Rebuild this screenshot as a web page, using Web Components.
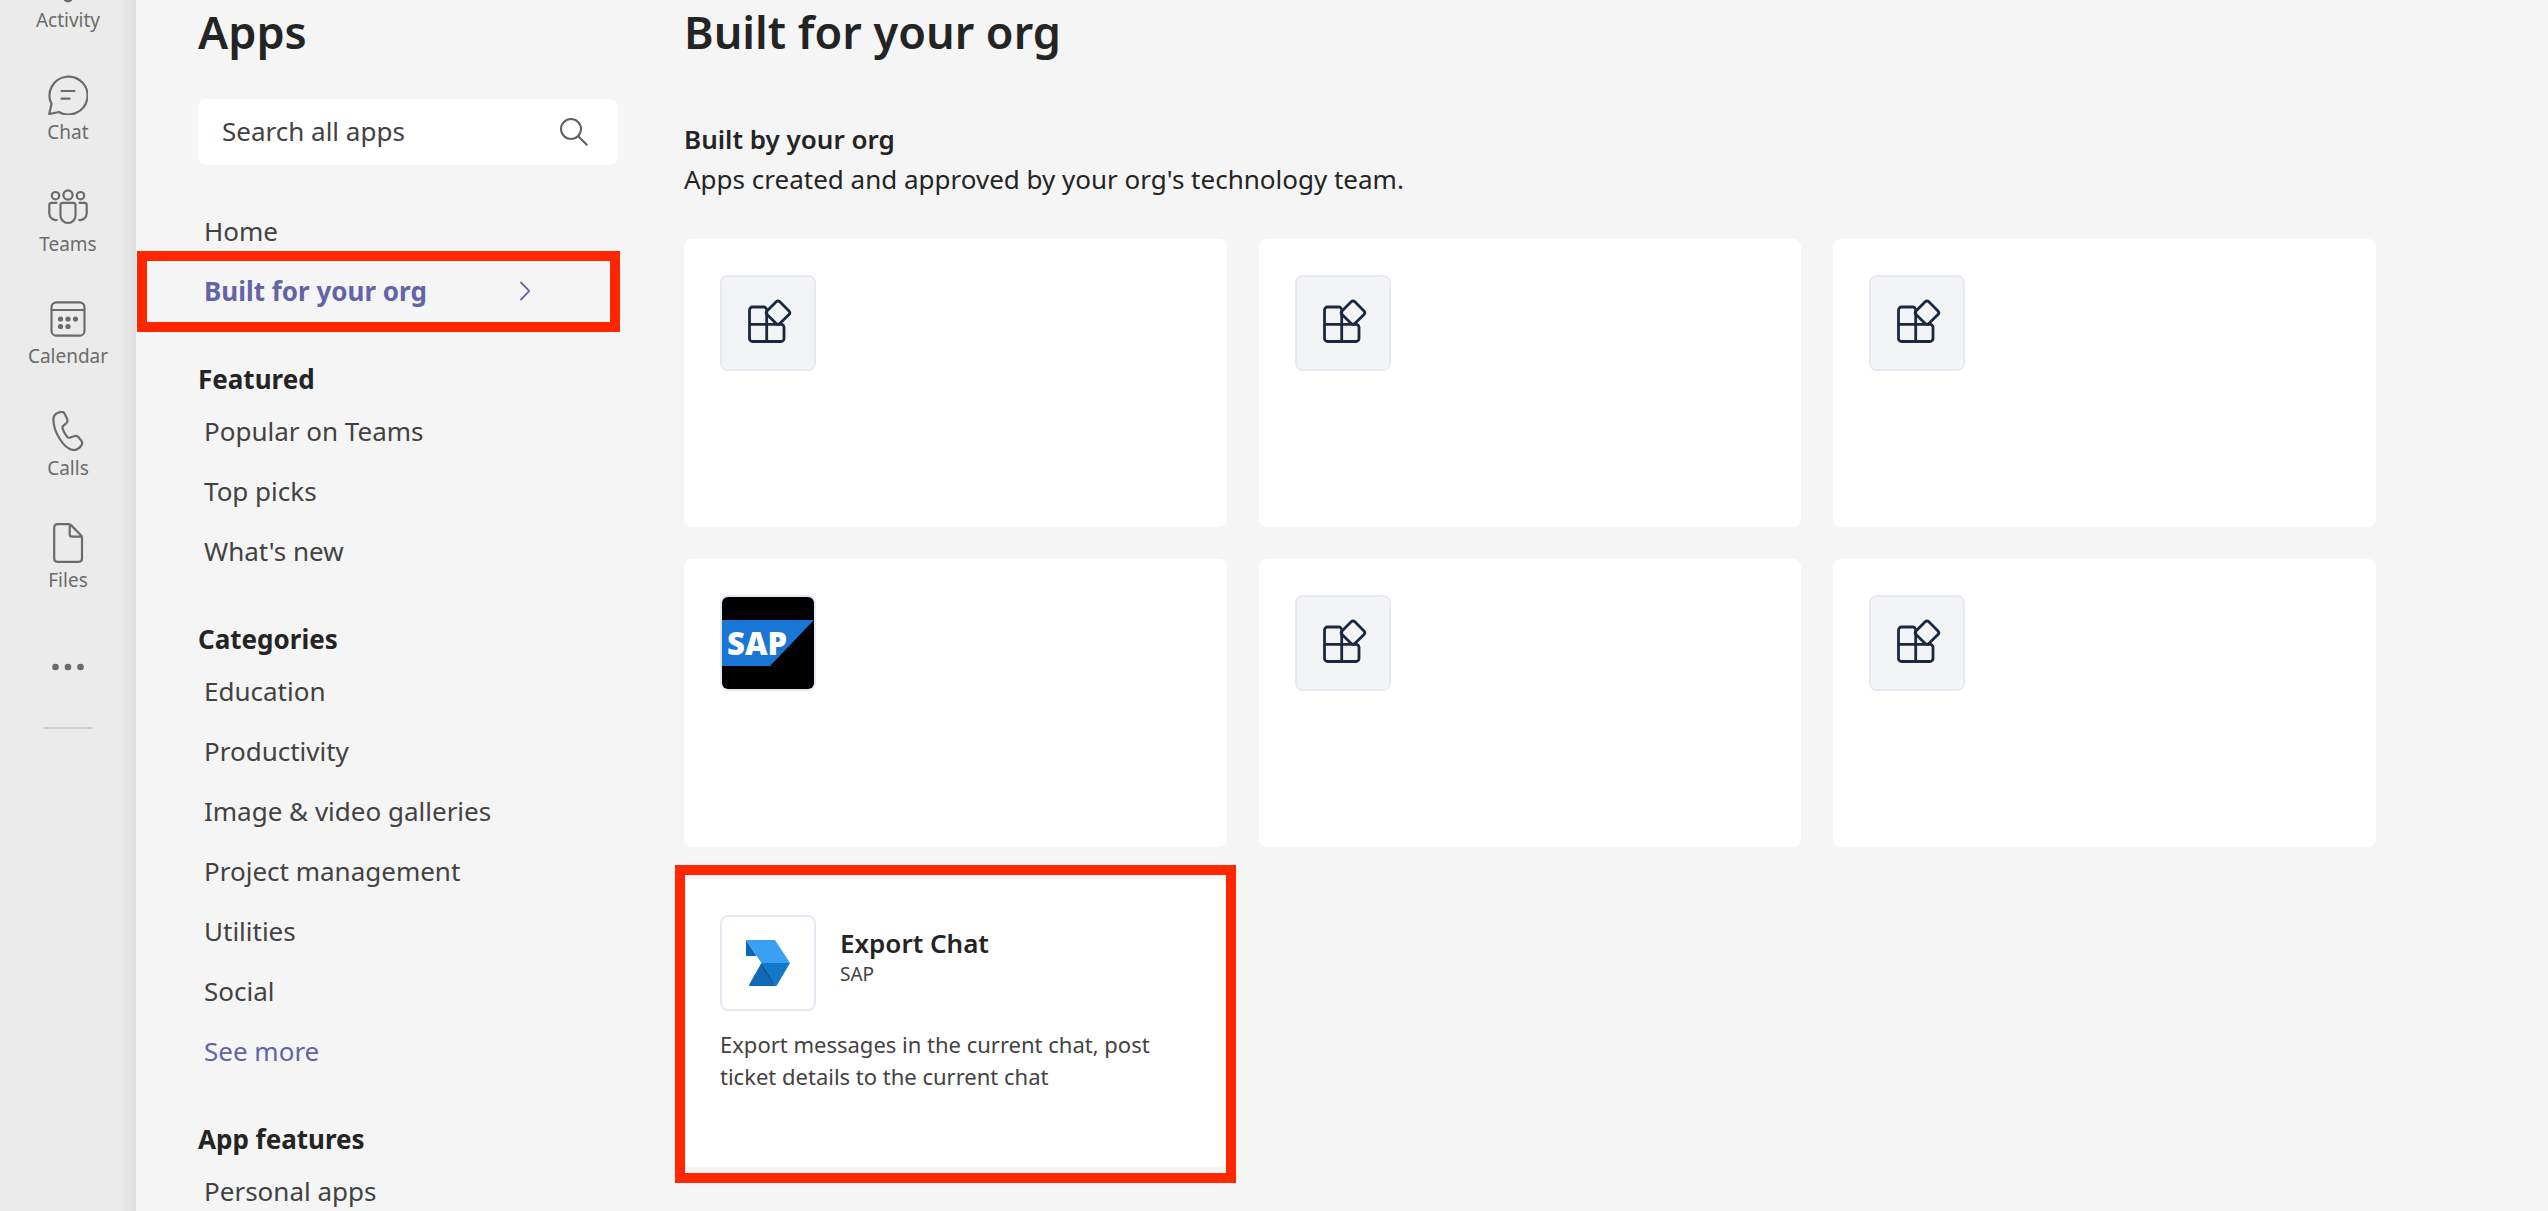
<!DOCTYPE html>
<html lang="en">
<head>
<meta charset="utf-8">
<title>Apps</title>
<style>
body { margin: 0; background: #f5f5f5; font-family: "Noto Sans", "Open Sans", sans-serif; color: #242424; }
</style>
</head>
<body>
<apps-shell>
  <app-rail slot="rail">
    <rail-item icon="bell">Activity</rail-item>
    <rail-item icon="chat">Chat</rail-item>
    <rail-item icon="teams">Teams</rail-item>
    <rail-item icon="calendar">Calendar</rail-item>
    <rail-item icon="calls">Calls</rail-item>
    <rail-item icon="files">Files</rail-item>
  </app-rail>
  <side-panel slot="side" heading="Apps">
    <nav-group>
      <nav-item>Home</nav-item>
      <nav-item current>Built for your org</nav-item>
    </nav-group>
    <nav-group heading="Featured">
      <nav-item>Popular on Teams</nav-item>
      <nav-item>Top picks</nav-item>
      <nav-item>What's new</nav-item>
    </nav-group>
    <nav-group heading="Categories">
      <nav-item>Education</nav-item>
      <nav-item>Productivity</nav-item>
      <nav-item>Image &amp; video galleries</nav-item>
      <nav-item>Project management</nav-item>
      <nav-item>Utilities</nav-item>
      <nav-item>Social</nav-item>
      <nav-item accent>See more</nav-item>
    </nav-group>
    <nav-group heading="App features">
      <nav-item>Personal apps</nav-item>
    </nav-group>
  </side-panel>
  <app-gallery heading="Built for your org" subheading="Built by your org" description="Apps created and approved by your org's technology team.">
    <app-card icon="apps"></app-card>
    <app-card icon="apps"></app-card>
    <app-card icon="apps"></app-card>
    <app-card icon="sap"></app-card>
    <app-card icon="apps"></app-card>
    <app-card icon="apps"></app-card>
    <app-card icon="export" name="Export Chat" publisher="SAP" marked>Export messages in the current chat, post ticket details to the current chat</app-card>
  </app-gallery>
</apps-shell>
<script>
const RAIL_ICONS = {
  bell: '<path d="M6 28h28l-3-7V12a11 11 0 0 0-22 0v9z"/><path fill="currentColor" d="M16 34.500a4 4 0 0 0 8 0z"/>',
  chat: '<path d="M3.500 29A19 19 0 1 1 11 37L1.200 39Z"/><path d="M13.500 16h13M13.500 23.700h8" stroke-linecap="round"/>',
  teams: '<circle cx="20" cy="8" r="4.600"/><circle cx="7.500" cy="8.700" r="3.700"/><circle cx="32.500" cy="8.700" r="3.700"/><path d="M14.500 15.800h11a2 2 0 0 1 2 2V28.500a7.500 7.500 0 0 1-15 0V17.800a2 2 0 0 1 2-2zM9.300 15.800H3.300a2 2 0 0 0-2 2V26.500a6.500 6.500 0 0 0 8.200 6.300M30.700 15.800h6a2 2 0 0 1 2 2V26.500a6.500 6.500 0 0 1-8.200 6.300"/>',
  calendar: '<rect x="3.500" y="3.300" width="33" height="33.400" rx="5"/><path d="M3.500 11h33"/><g fill="currentColor" stroke="none"><circle cx="12.500" cy="20" r="2.600"/><circle cx="20" cy="20" r="2.600"/><circle cx="27.500" cy="20" r="2.600"/><circle cx="12.500" cy="27.500" r="2.600"/><circle cx="20" cy="27.500" r="2.600"/></g>',
  calls: '<path d="M10 1.800C12.500.8 15.500.5 16.500 2.500L19 7.500C20 9.700 19.700 11 18 12.500L15.200 14.800C14.200 15.700 14.300 17 15 18.700C16 21.300 17.500 24 19.300 26C20.200 26.900 21 27 22.300 26.500L26 25.200C28 24.600 29.500 24.900 30.800 26.500L33.300 29.700C34.500 31.300 34.400 33 33.300 34.500C31.500 37 29.500 39 26 39C21 39 15.500 34 11.500 27.500C7 20.300 5.400 14 5.400 8.500C5.400 5 7.500 2.800 10 1.800Z"/>',
  files: '<path d="M9.500 1.200H20.500Q22 1.200 23.200 2.400L33 12.200Q34 13.200 34 14.700V35.500Q34 38.800 30.700 38.800H9.500Q6.200 38.800 6.200 35.500V4.500Q6.200 1.200 9.500 1.200ZM21.700 1.500V11.500Q21.700 13.700 24 13.700H34"/>'
};

const APP_ICONS = {
  apps: '<rect width="96" height="96" fill="#f3f4f6"/><g fill="none" stroke="#1b2840" stroke-width="2.800"><path d="M46.700 67V35a3 3 0 0 0-3-3H32.500a3 3 0 0 0-3 3V63.500a3 3 0 0 0 3 3H61a3 3 0 0 0 3-3V52.300a3 3 0 0 0-3-3H29.500"/><path d="M56.200 26.800a2.600 2.600 0 0 1 3.600 0L69 36a2.600 2.600 0 0 1 0 3.600L59.800 48.500a2.600 2.600 0 0 1-3.600 0L47 39.600a2.600 2.600 0 0 1 0-3.600z"/></g>',
  sap: '<rect width="96" height="96"/><path d="M0 25H94L50 71H0z" fill="#1a76d5"/><text x="7" y="60" font-family="Open Sans, sans-serif" font-weight="800" font-size="31" fill="#fff">SAP</text>',
  export: '<path d="M26 25H55L70 48H41.400z" fill="#3aa0f3"/><path d="M26 25L36.500 41H26z" fill="#0e66b1"/><path d="M41.400 48H70L56.500 71z" fill="#1279ca"/><path d="M41.400 48L56.500 71H30Q28.500 71 29.200 69.500z" fill="#0f69b5"/><path d="M41.400 48L56.500 71L42.500 54z" fill="#0b5794"/>'
};

function define(name, render) {
  customElements.define(name, class extends HTMLElement {
    constructor() {
      super();
      this.attachShadow({ mode: 'open' });
    }
    connectedCallback() {
      this.shadowRoot.innerHTML = render(this);
    }
  });
}

define('apps-shell', () => `
  <style>
    :host { display: flex; height: 100vh; overflow: hidden; }
    ::slotted(*) { flex: none; }
    main { flex: 1; min-width: 0; }
  </style>
  <slot name="rail"></slot>
  <slot name="side"></slot>
  <main><slot></slot></main>`);

define('app-rail', () => `
  <style>
    :host { display: block; width: 136px; background: linear-gradient(to right, #ebebeb 120px, #dedede 136px); color: #6b6b6b; }
    nav { display: flex; flex-direction: column; align-items: center; margin-top: -48px; }
    button { border: 0; padding: 0; background: none; color: inherit; width: 100%; height: 86px; }
    svg { display: block; margin: auto; fill: currentColor; }
    hr { width: 48px; height: 2px; margin: 17px 0 0; border: 0; background: #d1d1d1; }
  </style>
  <nav aria-label="Main">
    <slot></slot>
    <button aria-label="More apps"><svg width="40" height="8"><circle cx="7.500" cy="4" r="3.300"/><circle cx="20" cy="4" r="3.300"/><circle cx="32.500" cy="4" r="3.300"/></svg></button>
    <hr>
  </nav>`);

define('rail-item', el => `
  <style>
    :host { display: block; width: 100%; }
    a { display: flex; flex-direction: column; align-items: center; box-sizing: border-box; height: 112px; padding-top: 11px; gap: 3px; color: inherit; text-decoration: none; font-size: 19px; line-height: 28px; }
    svg { display: block; fill: none; stroke: currentColor; stroke-width: 2.200; stroke-linejoin: round; }
  </style>
  <a href="#"><svg width="40" height="40" viewBox="0 0 40 40">${RAIL_ICONS[el.getAttribute('icon')]}</svg><slot></slot></a>`);

define('side-panel', el => `
  <style>
    :host { display: block; box-sizing: border-box; width: 548px; padding: 0 66px 0 62px; }
    h1 { margin: 0 0 35px; font-size: 45px; line-height: 64px; font-weight: 600; }
    label { display: flex; align-items: center; height: 66px; padding: 0 30px 0 24px; margin-bottom: 36px; background: #fff; border-radius: 8px; }
    input { flex: 1; min-width: 0; border: 0; padding: 0 0 2px; outline: 0; background: none; font: inherit; font-size: 26px; color: #424242; }
    input::placeholder { color: #424242; opacity: 1; }
    svg { display: block; fill: none; stroke: #616161; stroke-width: 2; }
  </style>
  <h1>${el.getAttribute('heading')}</h1>
  <label>
    <input type="text" placeholder="Search all apps" aria-label="Search all apps">
    <svg width="28" height="28" viewBox="0 0 28 28"><circle cx="11" cy="11" r="10"/><path d="M18 18L27.300 27.300"/></svg>
  </label>
  <slot></slot>`);

define('nav-group', el => {
  const heading = el.getAttribute('heading');
  return `
  <style>
    :host { display: block; }
    h2 { margin: 0; padding: 38px 0 2px; font-size: 26px; line-height: 40px; font-weight: 700; }
  </style>
  ${heading ? `<h2>${heading}</h2>` : ''}
  <slot></slot>`;
});

define('nav-item', el => `
  <style>
    :host { display: block; position: relative; }
    a { display: flex; align-items: center; justify-content: space-between; padding: 0 88px 0 6px; font-size: 26px; line-height: 60px; color: #424242; text-decoration: none; white-space: nowrap; }
    :host([current]) a { color: #6264a7; font-weight: 700; }
    :host([accent]) a { color: #6264a7; }
    svg { fill: none; stroke: currentColor; stroke-width: 1.800; }
    .mark { position: absolute; inset: -10px -2px -11px -61px; border: 10px solid #ff2600; pointer-events: none; }
  </style>
  <a href="#"><span><slot></slot></span>${el.hasAttribute('current') ? '<svg width="10" height="20" viewBox="0 0 10 20"><path d="M.5 1L9.300 10L.5 19"/></svg>' : ''}</a>
  ${el.hasAttribute('current') ? '<div class="mark"></div>' : ''}`);

define('app-gallery', el => `
  <style>
    :host { display: block; padding: 0 172px 0 0; }
    h1 { margin: 0 0 55px; font-size: 45px; line-height: 64px; font-weight: 600; }
    h2, p { margin: 0; font-size: 26px; line-height: 40px; }
    h2 { font-weight: 600; }
    .grid { display: grid; grid-template-columns: repeat(3, 1fr); gap: 32px; margin-top: 40px; }
  </style>
  <h1>${el.getAttribute('heading')}</h1>
  <h2>${el.getAttribute('subheading')}</h2>
  <p>${el.getAttribute('description')}</p>
  <div class="grid"><slot></slot></div>`);

define('app-card', el => {
  const name = el.getAttribute('name');
  return `
  <style>
    :host { display: block; position: relative; box-sizing: border-box; min-height: 288px; padding: 36px; background: #fff; border-radius: 8px; }
    header { display: flex; gap: 24px; }
    .icon { box-sizing: border-box; width: 96px; height: 96px; border: 2px solid #e8e8f2; border-radius: 8px; overflow: hidden; }
    svg { display: block; }
    h3 { margin: 10px 0 0; font-size: 26px; line-height: 36px; font-weight: 600; }
    small { display: block; font-size: 19px; line-height: 26px; color: #424242; }
    p { margin: 17px 0 0; font-size: 22px; line-height: 32px; color: #424242; }
    .mark { position: absolute; inset: -14px -9px -16px -9px; border: 10px solid #ff2600; pointer-events: none; }
  </style>
  <header>
    <div class="icon"><svg width="92" height="92" viewBox="2 2 92 92">${APP_ICONS[el.getAttribute('icon')]}</svg></div>
    ${name ? `<div><h3>${name}</h3><small>${el.getAttribute('publisher')}</small></div>` : ''}
  </header>
  ${name ? '<p><slot></slot></p>' : ''}
  ${el.hasAttribute('marked') ? '<div class="mark"></div>' : ''}`;
});
</script>
</body>
</html>
